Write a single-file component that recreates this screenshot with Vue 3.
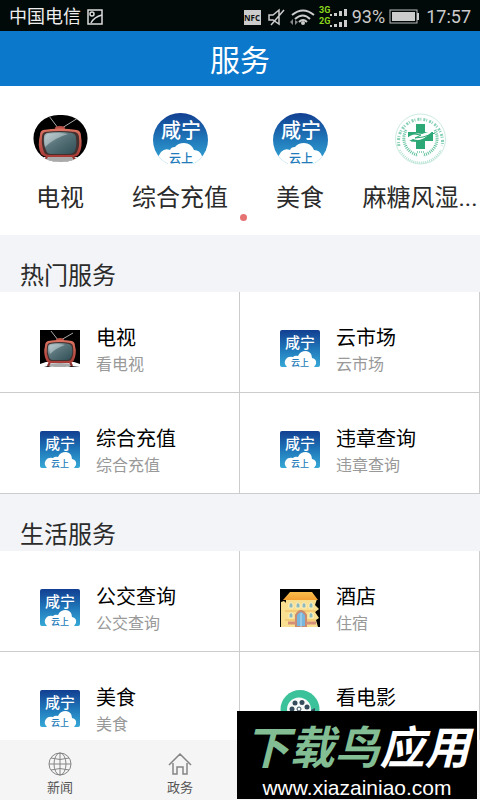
<script setup>
const shortcuts = [
  { name: '电视', icon: 'tv-round' },
  { name: '综合充值', icon: 'city-round' },
  { name: '美食', icon: 'city-round' },
  { name: '麻糖风湿...', icon: 'clinic' },
]

const sections = [
  {
    title: '热门服务',
    items: [
      { name: '电视', note: '看电视', icon: 'tv' },
      { name: '云市场', note: '云市场', icon: 'city' },
      { name: '综合充值', note: '综合充值', icon: 'city' },
      { name: '违章查询', note: '违章查询', icon: 'city' },
    ],
  },
  {
    title: '生活服务',
    items: [
      { name: '公交查询', note: '公交查询', icon: 'city' },
      { name: '酒店', note: '住宿', icon: 'hotel' },
      { name: '美食', note: '美食', icon: 'city' },
      { name: '看电影', icon: 'film' },
    ],
  },
]
</script>

<template>
  <div class="screen">
    <!-- Shared artwork -->
    <svg class="sprites" aria-hidden="true">
      <defs>
        <linearGradient id="sky" x1="0" y1="0" x2="0" y2="1">
          <stop offset="0" stop-color="#123f91" />
          <stop offset="0.5" stop-color="#1f76b9" />
          <stop offset="1" stop-color="#36a8d6" />
        </linearGradient>
        <linearGradient id="glass" x1="0" y1="0" x2="1" y2="1">
          <stop offset="0" stop-color="#b4c6ca" />
          <stop offset="0.4" stop-color="#5c777d" />
          <stop offset="1" stop-color="#2f4d55" />
        </linearGradient>
        <linearGradient id="case" x1="0" y1="0" x2="0" y2="1">
          <stop offset="0" stop-color="#dd7563" />
          <stop offset="1" stop-color="#a83935" />
        </linearGradient>
        <linearGradient id="roof" x1="0" y1="0" x2="0" y2="1">
          <stop offset="0" stop-color="#f8bd4d" />
          <stop offset="1" stop-color="#f3a032" />
        </linearGradient>
        <clipPath id="round"><ellipse cx="27.5" cy="27" rx="27.5" ry="27" /></clipPath>
        <clipPath id="tvround"><rect x="0.5" y="2" width="54" height="47" rx="25" ry="23" /></clipPath>
      </defs>

      <symbol id="tv" viewBox="0 0 40 38">
        <rect width="40" height="37" />
        <path d="M0 34 L6 32 H34 L40 34 V37 L31 36 L24 38 H16 L8 36 L0 38Z" fill="#fff" />
        <ellipse cx="20" cy="35" rx="13" ry="2" fill="#aaa" />
        <path d="M18 10 L11 1 M21 10 L33 3" stroke="#aaa" stroke-width="1" />
        <path d="M10 32 L8 36 M30 32 L32 36" stroke="#8d2d2c" stroke-width="2" />
        <ellipse cx="20" cy="10" rx="4" ry="2" fill="#bd5348" />
        <path d="M8 11 Q20 9 32 11 Q35 12 35 16 Q37 23 34 30 Q33 33 29 33 H11 Q7 33 6 30 Q3 23 5 16 Q5 12 8 11Z" fill="url(#case)" />
        <path d="M9 13 Q20 11 30 13 Q33 14 33 17 Q34 24 32 28 Q31 31 28 31 H12 Q9 31 8 28 Q6 23 7 17 Q7 14 9 13Z" fill="#43312f" />
        <path d="M10 14 Q20 12 29 14 Q32 15 32 18 Q33 24 31 27 Q30 30 27 30 H13 Q10 30 9 27 Q7 22 8 17 Q8 15 10 14Z" fill="url(#glass)" />
        <path d="M11 15 Q18 13 25 15 Q16 18 10 24 Q8 16 11 15Z" fill="#d0dee1" opacity=".5" />
      </symbol>

      <symbol id="tv-round" viewBox="0 0 55 52">
        <g clip-path="url(#tvround)">
          <rect width="55" height="52" />
          <path d="M0 44 H55 V52 H0Z" fill="#fff" />
          <ellipse cx="28" cy="46" rx="17" ry="3" fill="#aaa" />
          <path d="M25 15 L16 3 M29 15 L45 5" stroke="#aaa" stroke-width="1" />
          <path d="M15 42 L12 47 M39 42 L42 47" stroke="#942f2c" stroke-width="2" />
          <ellipse cx="27" cy="15" rx="5" ry="2" fill="#bd5348" />
          <path d="M10 17 Q27 14 44 17 Q48 18 48 23 Q50 34 46 41 Q44 44 39 44 H16 Q11 44 8 41 Q4 33 7 22 Q7 18 10 17Z" fill="url(#case)" />
          <path d="M12 19 Q27 17 42 19 Q46 20 46 25 Q47 33 44 39 Q43 42 38 42 H17 Q12 42 11 39 Q8 31 9 24 Q9 20 12 19Z" fill="#44302e" />
          <path d="M14 20 Q27 18 39 20 Q43 21 43 25 Q44 33 42 38 Q40 41 37 41 H18 Q14 41 13 37 Q10 31 11 24 Q11 21 14 20Z" fill="url(#glass)" />
          <path d="M15 21 Q26 19 35 21 Q21 25 12 34 Q10 22 15 21Z" fill="#d4e0e1" opacity=".5" />
        </g>
      </symbol>

      <symbol id="city" viewBox="0 0 40 38">
        <rect width="40" height="37" rx="2" fill="url(#sky)" />
        <path d="M7 37 Q3 33 6 29 Q8 26 13 27 Q15 25 18 26 Q20 21 26 21 Q32 22 32 28 Q37 29 36 34 L34 37Z" fill="#fff" />
      </symbol>

      <symbol id="city-round" viewBox="0 0 55 52">
        <g clip-path="url(#round)">
          <rect width="55" height="51" fill="url(#sky)" />
          <path d="M0 52 L8 39 Q12 35 17 37 Q18 34 22 34 Q25 30 31 30 Q38 30 41 37 Q47 37 49 43 L55 52Z" fill="#fff" />
        </g>
      </symbol>

      <symbol id="clinic" viewBox="0 0 55 52">
        <g fill="none" stroke="#39b184">
          <circle cx="27.5" cy="26" r="25" stroke-width="1" opacity=".25" />
          <path d="M6 33 A22 22 0 1 1 49 33" stroke-width="3" stroke-dasharray="2 1 1 2" opacity=".6" />
          <path d="M7 37 A23 23 0 0 0 48 37" stroke-width="2" stroke-dasharray="1 1" opacity=".4" />
          <path d="M13 17 A17 17 0 0 0 25 42 M42 17 A17 17 0 0 1 30 42" stroke-width="3" stroke-dasharray="1 1" opacity=".8" />
        </g>
        <path d="M23 11 H32 V19 H40 V28 H32 V36 H23 V28 H15 V19 H23Z" fill="#2ba875" />
        <path d="M14 25 Q22 19 29 21 L41 17 L34 23 Q27 29 20 26 L14 29Z" fill="#fff" />
        <path d="M15 20 L28 22 L22 25 L30 24 L42 20 M18 28 Q28 30 36 23" fill="none" stroke="#2ba875" stroke-width="1" />
        <path d="M24 39 H32" stroke="#2ba875" stroke-width="1" stroke-dasharray="1 1" />
      </symbol>

      <symbol id="hotel" viewBox="0 0 40 38">
        <rect width="40" height="38" />
        <path d="M1 13 L4 12 L7 15 V38 H1Z M6 10 H37 L35 16 L39 20 L35 23 L39 29 L36 31 L38 38 H5Z" fill="#f9df91" />
        <path d="M10 3 H32 L38 11 H3Z" fill="url(#roof)" />
        <path d="M5 22 H36 M5 31 H36" stroke="#eeb75c" stroke-width="1" />
        <g fill="#8db9bd" stroke="#fff2bd" stroke-width="1">
          <path d="M9 19 V15 Q11 12 13 15 V19Z M16 19 V15 Q18 12 20 15 V19Z M22 19 V15 Q24 12 26 15 V19Z M29 19 V15 Q31 12 33 15 V19Z" />
          <path d="M9 29 V25 Q11 22 13 25 V29Z M29 29 V25 Q31 22 33 25 V29Z" />
        </g>
        <path d="M16 38 V26 Q21 18 26 26 V38Z" fill="#78b6dd" stroke="#c98b72" stroke-width="2" />
        <path d="M8 34 H16 M26 34 H36" stroke="#d58f78" stroke-width="3" />
        <path d="M21 24 V38" stroke="#b8dff3" stroke-width="1" />
      </symbol>

      <symbol id="film" viewBox="0 0 40 38">
        <circle cx="20" cy="19.5" r="19.5" fill="#3bc29a" />
        <circle cx="19" cy="19.5" r="12" fill="#f7faf9" />
        <g fill="#344c5b">
          <circle cx="15" cy="13" r="2.5" /><circle cx="22" cy="12.5" r="2.5" />
          <circle cx="27" cy="17" r="2.5" /><circle cx="12" cy="19" r="2.5" />
          <circle cx="15" cy="25" r="2.5" /><circle cx="23" cy="25" r="2.5" />
          <path d="M31 20 L35 18 V25 L31 23Z" />
        </g>
        <circle cx="19" cy="19" r="2" fill="none" stroke="#344c5b" />
      </symbol>
    </svg>

    <div class="status">
      <span class="carrier">中国电信</span>
      <svg class="picture" width="16" height="16" viewBox="0 0 16 16" fill="none" stroke="#ddd" stroke-width="1.5">
        <rect x="1" y="1" width="14" height="14" />
        <circle cx="5" cy="5" r="2" />
        <path d="M4 14 Q7 8 15 6" />
      </svg>
      <div class="indicators">
        <svg width="110" height="26" viewBox="0 0 110 26" fill="none" stroke="#ccc" stroke-width="2">
          <rect x="2" y="6" width="17" height="15" fill="#ccc" stroke="none" />
          <text x="10" y="17" class="nfc" fill="#111" stroke="none" text-anchor="middle">NFC</text>
          <path d="M27 11 H31 L37 6 V20 L31 16 H27Z M42 6 L29 21" stroke-width="1.5" />
          <path d="M50 11 Q61 2 72 11 M53 15 Q61 8 68 15 M57 18 Q61 14 65 18" />
          <circle cx="61" cy="19" r="2" fill="#ccc" stroke="none" />
          <path d="M48 18 L51 15 V21Z M53 16 L56 18 L53 21Z" fill="#888" stroke="none" />
          <g fill="#ccc" stroke="none">
            <path d="M88 10 H90 V12 H88Z M92 9 H95 V12 H92Z M97 7 H100 V12 H97Z M102 5 H105 V12 H102Z" />
            <path d="M88 21 H90 V23 H88Z M92 20 H95 V23 H92Z M97 18 H100 V23 H97Z M102 16 H105 V23 H102Z" />
          </g>
          <text x="77" y="9" class="network" fill="#8bd51c" stroke="none">3G</text>
          <text x="77" y="20" class="network" fill="#8bd51c" stroke="none">2G</text>
        </svg>
        <span>93%</span>
        <svg class="battery" width="31" height="15" viewBox="0 0 31 15">
          <rect x="1" y="1" width="27" height="13" fill="none" stroke="#bbb" />
          <rect x="3" y="3" width="23" height="9" fill="#ccc" />
          <rect x="28" y="4" width="2" height="7" fill="#ccc" />
        </svg>
        <time>17:57</time>
      </div>
    </div>

    <header class="header"><h1>服务</h1></header>

    <main class="content">
      <div class="carousel">
        <div class="shortcuts">
          <a v-for="entry in shortcuts" :key="entry.name" class="shortcut" href="#">
            <svg width="55" height="52">
              <use :href="'#' + entry.icon" />
              <template v-if="entry.icon === 'city-round'">
                <text x="28" y="25" class="logo-text logo-large">咸宁</text>
                <text x="28" y="50" class="logo-text logo-medium">云上</text>
              </template>
            </svg>
            <span>{{ entry.name }}</span>
          </a>
        </div>
        <i class="page-dot"></i>
      </div>

      <section v-for="section in sections" :key="section.title">
        <h2>{{ section.title }}</h2>
        <div class="services">
          <a v-for="item in section.items" :key="item.name" class="service" href="#">
            <svg width="40" height="38">
              <use :href="'#' + item.icon" />
              <template v-if="item.icon === 'city'">
                <text x="20" y="18" class="logo-text logo-normal">咸宁</text>
                <text x="20" y="36" class="logo-text logo-small">云上</text>
              </template>
            </svg>
            <span class="labels">
              <strong>{{ item.name }}</strong>
              <small v-if="item.note">{{ item.note }}</small>
            </span>
          </a>
        </div>
      </section>
    </main>

    <nav class="tabs">
      <a href="#">
        <svg width="24" height="24" viewBox="0 0 24 24" fill="none" stroke="#858585" stroke-width="1">
          <circle cx="12" cy="12" r="11" />
          <ellipse cx="12" cy="12" rx="6" ry="11" />
          <path d="M12 1 V23 M1 12 H23 M3 6 Q12 9 21 6 M3 18 Q12 15 21 18" />
        </svg>
        <span>新闻</span>
      </a>
      <a href="#">
        <svg width="24" height="24" viewBox="0 0 24 24" fill="none" stroke="#858585" stroke-width="1.5">
          <path d="M1 13 L12 2 L23 13 M5 11 V22 H9 V15 H15 V22 H19 V11" />
        </svg>
        <span>政务</span>
      </a>
    </nav>

    <aside class="watermark">
      <b><span>下载鸟</span>应用</b>
      <p>www.xiazainiao.com</p>
    </aside>
  </div>
</template>

<style>
body {
  margin: 0;
}
</style>

<style scoped>
.screen {
  display: flex;
  flex-direction: column;
  height: 100vh;
  overflow: hidden;
  background: #f2f4f8;
  color: #2b2b2b;
  font-family: Roboto, "Noto Sans CJK SC", sans-serif;
}
.sprites {
  position: absolute;
  width: 0;
  height: 0;
}
.logo-text {
  fill: #fff;
  font-family: "Noto Sans CJK SC", sans-serif;
  font-weight: 500;
  text-anchor: middle;
}
.logo-large {
  font-size: 20px;
}
.logo-normal {
  font-size: 15px;
}
.logo-medium {
  fill: #237bb9;
  font-size: 12px;
}
.logo-small {
  fill: #237bb9;
  font-size: 9px;
}
.nfc {
  font-family: "Open Sans", sans-serif;
  font-size: 8px;
  font-weight: 700;
}
.network {
  font-family: Roboto, sans-serif;
  font-size: 9px;
  font-weight: 700;
}
a {
  color: inherit;
  text-decoration: none;
}
.status {
  display: flex;
  flex: none;
  align-items: center;
  box-sizing: border-box;
  height: 31px;
  padding: 2px 9px 0;
  background: #020909;
  color: #ccc;
  font-size: 18px;
  line-height: 28px;
}
.carrier {
  color: #eee;
}
.picture {
  margin-left: 6px;
}
.indicators {
  display: flex;
  align-items: center;
  margin-left: auto;
}
.indicators svg {
  flex: none;
}
.battery {
  margin: 0 6px 0 4px;
}
.header {
  flex: none;
  background: #0b78cc;
  color: #fff;
  text-align: center;
}
h1 {
  margin: 0;
  padding-top: 4px;
  font-size: 30px;
  font-weight: 400;
  line-height: 51px;
}
.content {
  flex: 1;
  min-height: 0;
  overflow: hidden;
}
.carousel {
  display: flex;
  flex-direction: column;
  align-items: center;
  padding: 27px 0 14px;
  background: #fff;
}
.shortcuts {
  display: grid;
  grid-template-columns: repeat(4, 1fr);
  width: 100%;
}
.shortcut {
  display: flex;
  flex-direction: column;
  align-items: center;
  gap: 17px;
  min-width: 0;
  font-size: 24px;
  line-height: 32px;
  white-space: nowrap;
}
.shortcut svg,
.service svg {
  flex: none;
  overflow: visible;
}
.page-dot {
  width: 7px;
  height: 7px;
  margin-left: 6px;
  border-radius: 50%;
  background: #e57373;
}
h2 {
  margin: 0;
  padding: 25px 20px 0;
  font-size: 24px;
  font-weight: 400;
  line-height: 32px;
}
.services {
  display: grid;
  grid-template-columns: 1fr 1fr;
}
.service {
  display: flex;
  align-items: center;
  gap: 16px;
  box-sizing: border-box;
  height: 101px;
  padding: 14px 0 0 40px;
  border-right: 1px solid #ccc;
  border-bottom: 1px solid #ccc;
  background: #fff;
}
.labels {
  display: flex;
  flex-direction: column;
  box-sizing: border-box;
  height: 54px;
  padding-top: 2px;
}
strong {
  color: #000;
  font-size: 20px;
  font-weight: 400;
  line-height: 28px;
}
small {
  color: #999;
  font-size: 16px;
  line-height: 26px;
}
.tabs {
  display: grid;
  flex: none;
  grid-template-columns: repeat(4, 1fr);
  box-sizing: border-box;
  height: 60px;
  padding-top: 12px;
  background: #f5f5f5;
  color: #555;
}
.tabs a {
  display: flex;
  flex-direction: column;
  align-items: center;
  font-size: 13px;
  line-height: 24px;
}
.watermark {
  position: fixed;
  right: 3px;
  bottom: 1px;
  box-sizing: border-box;
  width: 240px;
  height: 88px;
  padding-top: 10px;
  background: #000;
  color: #fff;
  text-align: center;
}
.watermark b {
  display: block;
  font-size: 45px;
  font-style: italic;
  font-weight: 700;
  line-height: 56px;
  white-space: nowrap;
}
.watermark span {
  color: #82bd93;
}
.watermark p {
  margin: 0;
  font-family: "Liberation Sans", sans-serif;
  font-size: 21px;
  line-height: 22px;
}
</style>
